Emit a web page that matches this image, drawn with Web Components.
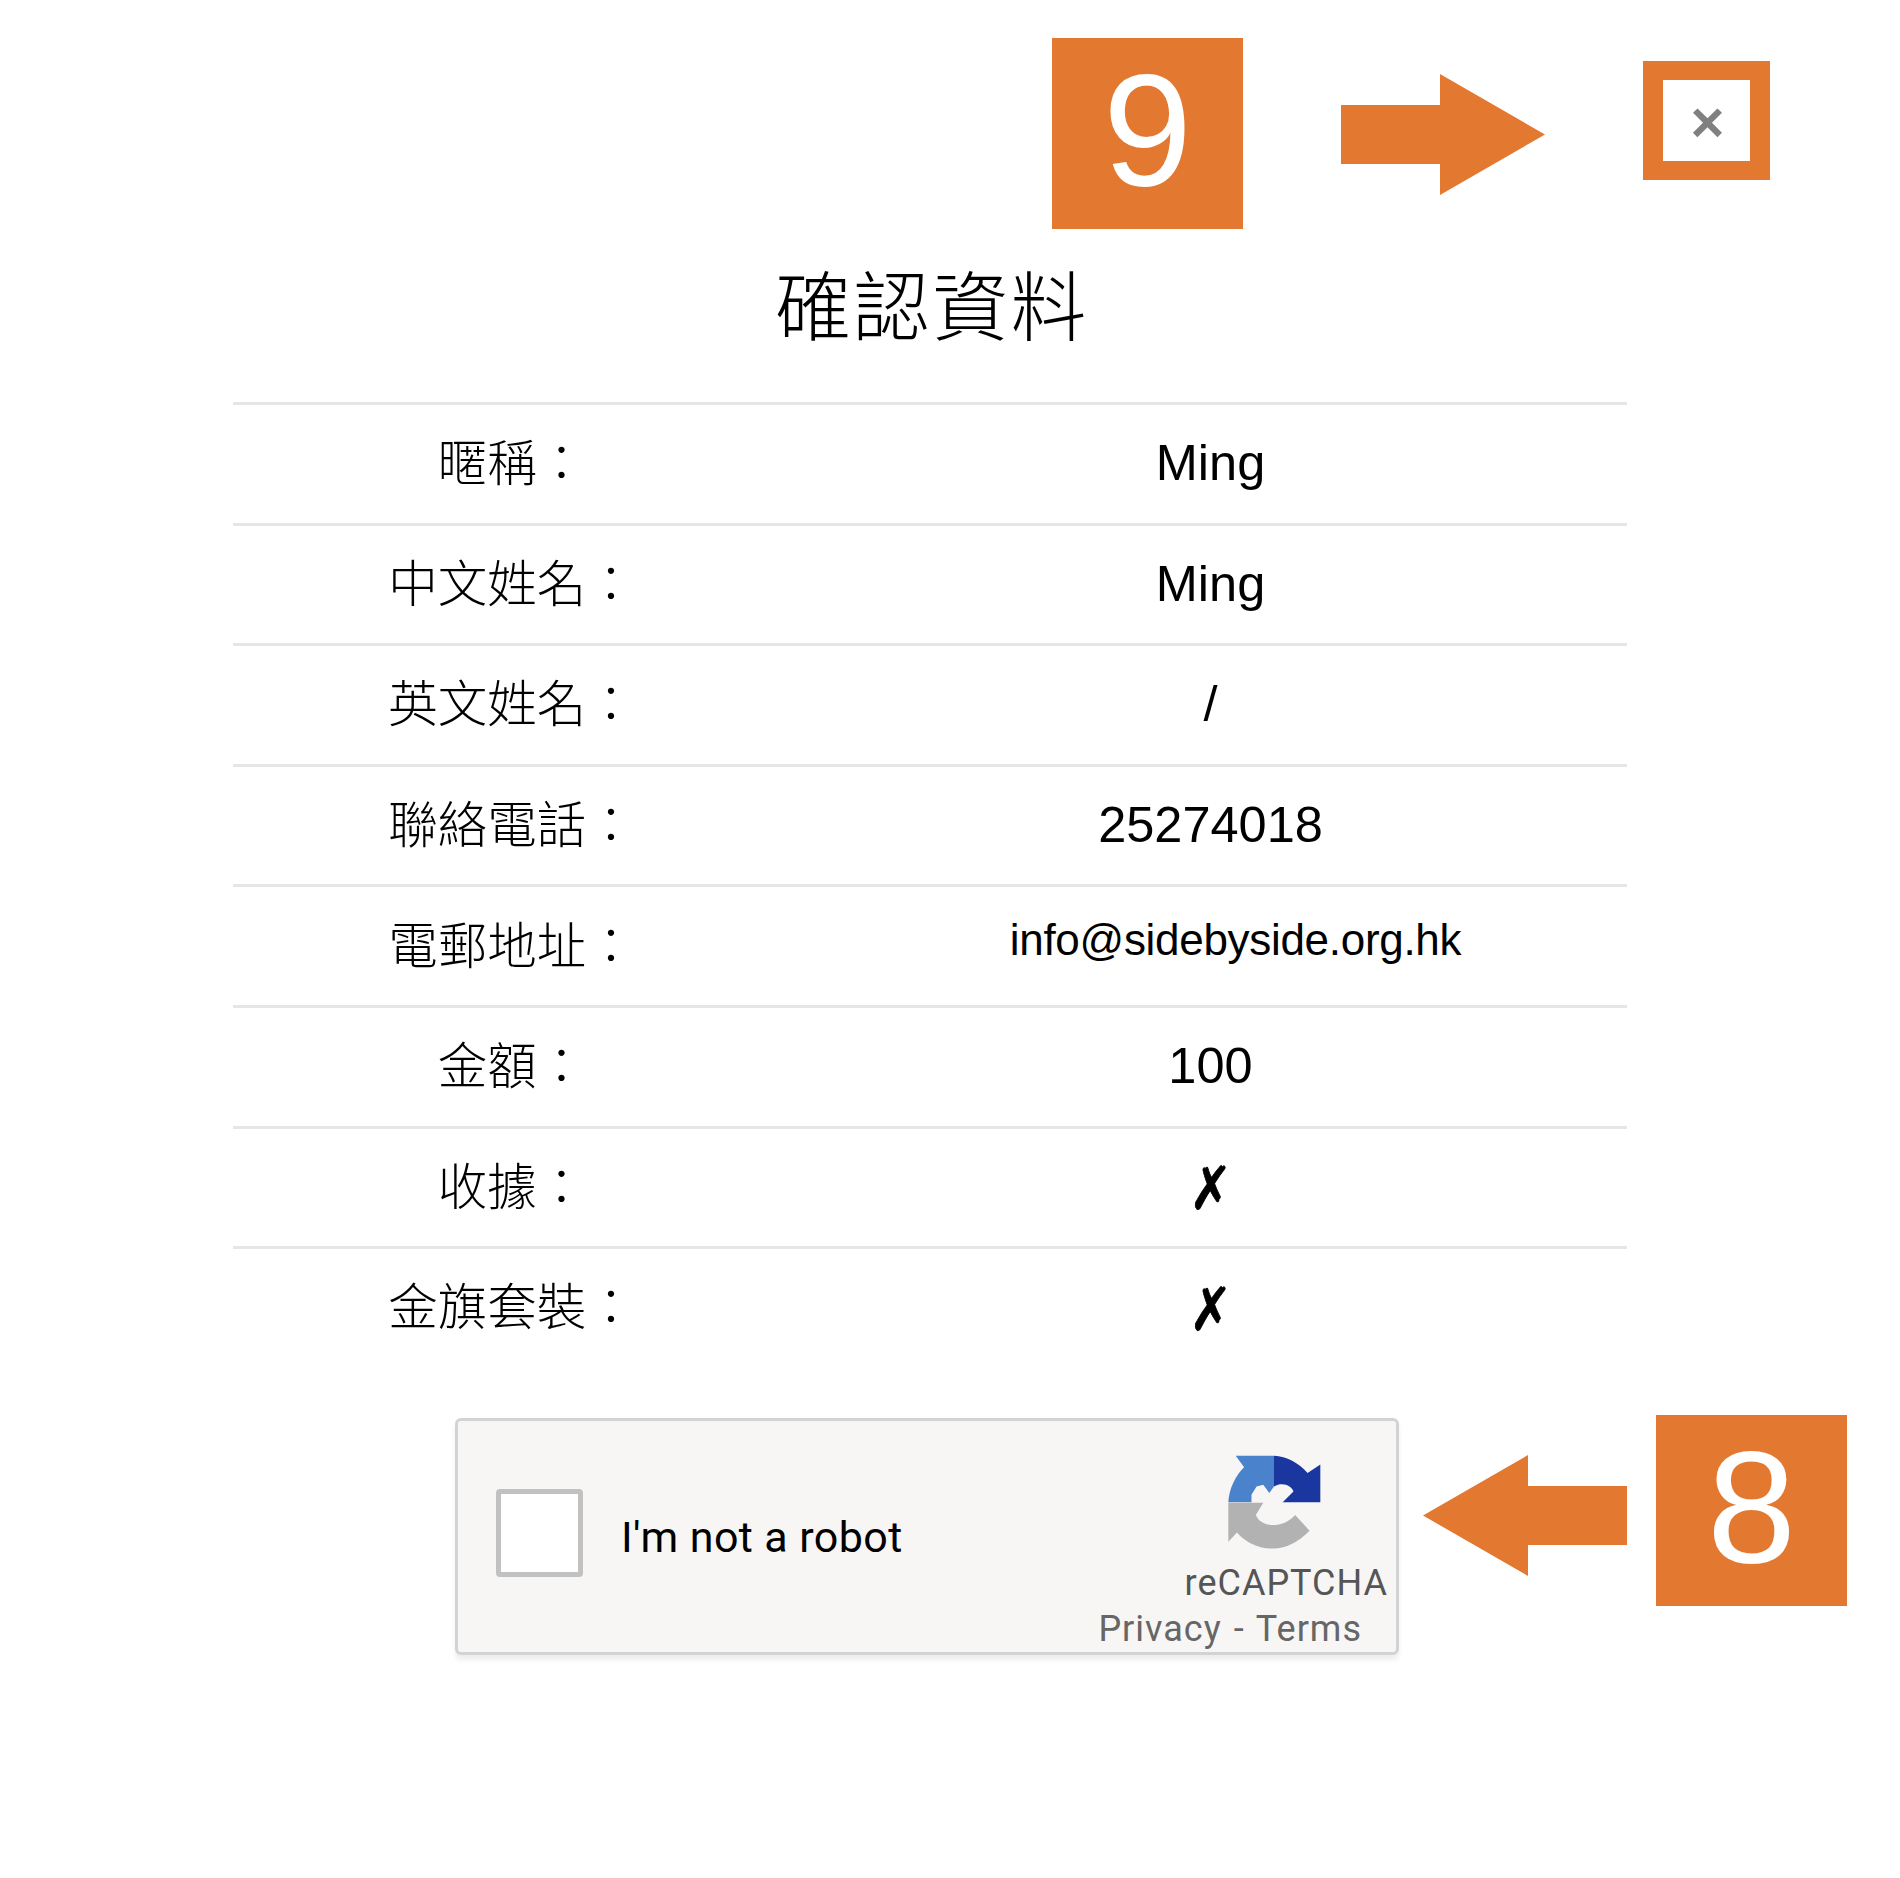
<!DOCTYPE html>
<html lang="zh-Hant">
<head>
<meta charset="utf-8">
<title>確認資料</title>
<style>
    html, body { margin: 0; background: #fff; }
    body { position: relative; width: 1900px; height: 1878px; overflow: hidden; }
</style>
</head>
<body>
<confirm-dialog>
    <span slot="title">確認資料</span>
    <info-row><span slot="label">暱稱：</span>Ming</info-row>
    <info-row><span slot="label">中文姓名：</span>Ming</info-row>
    <info-row><span slot="label">英文姓名：</span>/</info-row>
    <info-row><span slot="label">聯絡電話：</span>25274018</info-row>
    <info-row shifted><span slot="label">電郵地址：</span>info@sidebyside.org.hk</info-row>
    <info-row><span slot="label">金額：</span>100</info-row>
    <info-row><span slot="label">收據：</span><span class="cross">✗</span></info-row>
    <info-row><span slot="label">金旗套裝：</span><span class="cross">✗</span></info-row>
    <captcha-box slot="captcha"></captcha-box>
</confirm-dialog>

<close-mark></close-mark>
<step-badge style="left:1052px;top:38px">9</step-badge>
<step-badge style="left:1656px;top:1415px">8</step-badge>
<step-arrow style="left:1340.5px;top:74px"></step-arrow>
<step-arrow dir="left" style="left:1423px;top:1455px"></step-arrow>

<script>
    // small helper so every element gets an open shadow root from a template
    function tpl(html) {
        let t = document.createElement('template');
        t.innerHTML = html;
        return t;
    }

    const dialogTmpl = tpl(`
  <style>
    :host { display: block; width: 1394px; margin-left: 233px; color: #000; }
    h1 {
        margin: 0; height: 402px; box-sizing: border-box; padding: 255px 0 0 4px;
        font: 300 76px/94px "Noto Sans CJK TC", sans-serif;
        text-align: center; letter-spacing: 2.5px;
    }
    .captcha { display: block; margin: 51px 0 0 222px; }
  </style>
  <h1><slot name="title"></slot></h1>
  <slot></slot>
  <div class="captcha"><slot name="captcha"></slot></div>`);

    customElements.define('confirm-dialog', class extends HTMLElement {
        constructor() {
            super();
            this.attachShadow({mode: 'open'}).appendChild(dialogTmpl.content.cloneNode(true));
        }
    });

    const rowTmpl = tpl(`
  <style>
    :host {
        display: grid; grid-template-columns: 558px 1fr; align-items: center;
        height: 120.6px; box-sizing: border-box; border-top: 3px solid #e6e6e6;
        text-align: center; color: #000;
    }
    .label { font: 300 49.5px/60px "Noto Sans CJK TC", sans-serif; padding-bottom: 7px; }
    .value { font: 400 50.5px/60px "Liberation Sans", "DejaVu Sans", sans-serif; padding: 0 0 1px 3px; }
    :host([shifted]) .value { padding: 0 0 12px 53px; white-space: nowrap; font-size: 44px; letter-spacing: -.3px; }
    ::slotted(.cross) {
        display: inline-block; font-family: "DejaVu Sans", sans-serif; font-size: 54px;
        -webkit-text-stroke: .8px #000; transform: translateY(3px) scale(.95, 1.1);
    }
  </style>
  <div class="label"><slot name="label"></slot></div>
  <div class="value"><slot></slot></div>`);

    customElements.define('info-row', class extends HTMLElement {
        constructor() {
            super();
            this.attachShadow({mode: 'open'}).appendChild(rowTmpl.content.cloneNode(true));
        }
    });

    const captchaTmpl = tpl(`
  <style>
    :host {
        display: flex; align-items: stretch; box-sizing: border-box;
        width: 944px; height: 237px; background: #f7f6f5;
        border: 3px solid #d3d3d3; border-radius: 6px;
        box-shadow: 0 5px 5px rgba(0,0,0,.07);
        font-family: Roboto, "Liberation Sans", sans-serif;
    }
    .check {
        flex: none; box-sizing: border-box; width: 87px; height: 88px;
        margin: 68px 0 0 38px; background: #fff;
        border: 5px solid #c1c1c1; border-radius: 4px;
    }
    .text { flex: none; margin: 91px 0 0 38px; font-size: 43px; line-height: 50px; color: #000; letter-spacing: .4px; white-space: nowrap; }
    .brand { flex: 1; position: relative; display: flex; flex-direction: column; align-items: flex-end; color: #555; white-space: nowrap; }
    svg { display: block; width: 94px; height: 95px; margin: 34px 74px 0 0; }
    .name { margin: 13px 8px 0 0; font-size: 36px; line-height: 40px; letter-spacing: 1px; }
    .links { margin: 6px 34px 0 0; font-size: 36px; line-height: 40px; letter-spacing: 1px; word-spacing: 2px; color: #666; }
  </style>
  <div class="check"></div>
  <div class="text">I'm not a robot</div>
  <div class="brand">
    <svg viewBox="145 72 280 282">
      <path fill="#4a82cc" d="M168 74H282V165L268 185 250 160 230 165 215 190V212H146C148 170 170 130 193 108Z"/>
      <path fill="#1a379f" d="M282 74C320 76 355 95 382 125L420 100V212H308L340 180C335 165 310 150 282 165Z"/>
      <path fill="#b2b2b2" d="M146 214H250L228 250C240 285 305 295 345 250L388 297C350 335 310 352 275 350 230 350 190 325 172 302L146 330Z"/>
    </svg>
    <div class="name">reCAPTCHA</div>
    <div class="links">Privacy - Terms</div>
  </div>`);

    customElements.define('captcha-box', class extends HTMLElement {
        constructor() {
            super();
            this.attachShadow({mode: 'open'}).appendChild(captchaTmpl.content.cloneNode(true));
        }
    });

    const badgeTmpl = tpl(`
  <style>
    :host {
        position: absolute; display: flex; align-items: center; justify-content: center;
        width: 191px; height: 191px; box-sizing: border-box; padding-bottom: 8px;
        background: #e37831; color: #fff;
        font: 400 160px/1 "Liberation Sans", sans-serif;
    }
  </style>
  <slot></slot>`);

    customElements.define('step-badge', class extends HTMLElement {
        constructor() {
            super();
            this.attachShadow({mode: 'open'}).appendChild(badgeTmpl.content.cloneNode(true));
        }
    });

    const arrowTmpl = tpl(`
  <style>
    :host { position: absolute; display: block; width: 204px; height: 121px; }
    :host([dir="left"]) svg { transform: scaleX(-1); }
    svg { display: block; width: 100%; height: 100%; }
  </style>
  <svg viewBox="0 0 204 121"><path fill="#e37831" d="M0 31H99V0L204 60.5 99 121V90H0Z"/></svg>`);

    customElements.define('step-arrow', class extends HTMLElement {
        constructor() {
            super();
            this.attachShadow({mode: 'open'}).appendChild(arrowTmpl.content.cloneNode(true));
        }
    });

    const closeTmpl = tpl(`
  <style>
    :host {
        position: absolute; left: 1643px; top: 61px; box-sizing: border-box;
        display: flex; align-items: center; justify-content: center;
        width: 127px; height: 119px; padding: 2px 0 0 2px; background: #fff;
        border: solid #e37831; border-width: 19px 20px;
        color: #808080; font: 700 58px/1 "Liberation Sans", sans-serif;
    }
  </style>
  ×`);

    customElements.define('close-mark', class extends HTMLElement {
        constructor() {
            super();
            this.attachShadow({mode: 'open'}).appendChild(closeTmpl.content.cloneNode(true));
        }
    });
</script>
</body>
</html>
